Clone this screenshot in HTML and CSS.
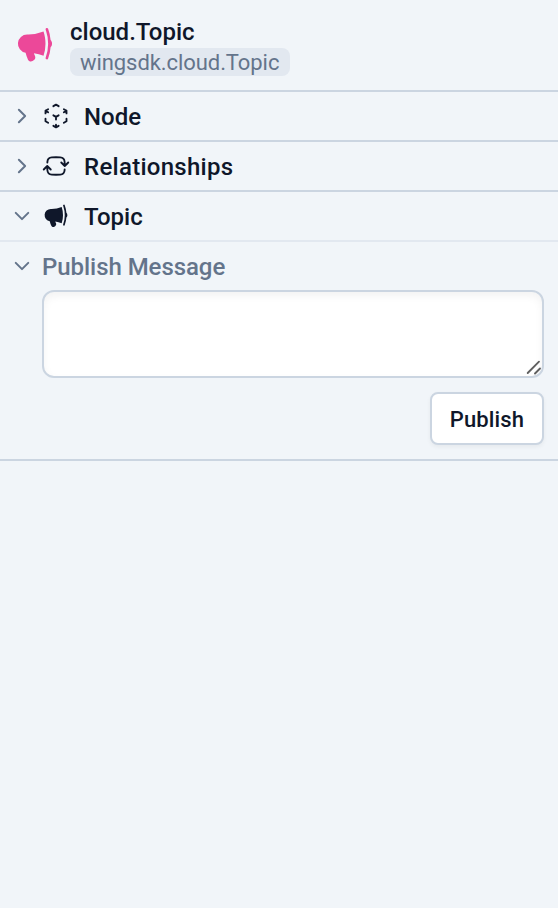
FILE: index.html
```html
<!DOCTYPE html>
<html lang="en">
<head>
<meta charset="utf-8">
<title>cloud.Topic</title>
<link rel="stylesheet" href="styles.css">
</head>
<body>
<svg class="defs" aria-hidden="true">
  <symbol id="megaphone" viewBox="0 0 24 24"><path fill="currentColor" d="M16.881 4.346A23.112 23.112 0 0 1 8.25 6H7.5a5.25 5.25 0 0 0-.88 10.427 21.593 21.593 0 0 0 1.378 3.94c.464 1.004 1.674 1.32 2.582.796l.657-.379c.88-.508 1.165-1.593.772-2.468a17.116 17.116 0 0 1-.628-1.607c1.918.258 3.76.75 5.5 1.446A21.727 21.727 0 0 0 18 11.25c0-2.414-.393-4.735-1.119-6.904ZM18.26 3.74a23.22 23.22 0 0 1 1.24 7.51 23.22 23.22 0 0 1-1.41 7.992.75.75 0 1 0 1.409.516 24.555 24.555 0 0 0 1.415-6.43 2.992 2.992 0 0 0 .836-2.078c0-.807-.319-1.54-.836-2.078a24.65 24.65 0 0 0-1.415-6.43.75.75 0 1 0-1.409.516c.059.16.116.321.17.483Z"/></symbol>
  <symbol id="right" viewBox="0 0 24 24"><path d="m8.25 4.5 7.5 7.5-7.5 7.5"/></symbol>
  <symbol id="down" viewBox="0 0 24 24"><path d="m19.5 8.25-7.5 7.5-7.5-7.5"/></symbol>
</svg>
<header class="header">
  <svg class="logo"><use href="#megaphone"/></svg>
  <div class="heading">
    <div class="title">cloud.Topic</div>
    <div class="badge"><span>wingsdk.cloud.Topic</span></div>
  </div>
</header>
<section class="row">
  <svg class="chevron"><use href="#right"/></svg>
  <svg class="icon" viewBox="0 0 24 24"><path d="m21 7.5-2.25-1.313M21 7.5v2.25m0-2.25-2.25 1.313M3 7.5l2.25-1.313M3 7.5l2.25 1.313M3 7.5v2.25m9 3 2.25-1.313M12 12.75l-2.25-1.313M12 12.75V15m0 6.75 2.25-1.313M12 21.75V19.5m0 2.25-2.25-1.313m0-16.875L12 2.25l2.25 1.313M21 14.25v2.25l-2.25 1.313m-13.5 0L3 16.5v-2.25"/></svg>
  <span class="label node">Node</span>
</section>
<section class="row">
  <svg class="chevron"><use href="#right"/></svg>
  <svg class="icon" viewBox="0 0 24 24"><path d="M19.5 12c0-1.232-.046-2.453-.138-3.662a4.006 4.006 0 0 0-3.7-3.7 48.678 48.678 0 0 0-7.324 0 4.006 4.006 0 0 0-3.7 3.7c-.017.22-.032.441-.046.662M19.5 12l3-3m-3 3-3-3m-12 3c0 1.232.046 2.453.138 3.662a4.006 4.006 0 0 0 3.7 3.7 48.656 48.656 0 0 0 7.324 0 4.006 4.006 0 0 0 3.7-3.7c.017-.22.032-.441.046-.662M4.5 12l3 3m-3-3-3 3"/></svg>
  <span class="label relationships">Relationships</span>
</section>
<section class="row open">
  <svg class="chevron"><use href="#down"/></svg>
  <svg class="icon solid"><use href="#megaphone"/></svg>
  <span class="label topic">Topic</span>
</section>
<section class="panel">
  <div class="subrow">
    <svg class="chevron"><use href="#down"/></svg>
    <span class="label publish-message">Publish Message</span>
  </div>
  <div class="form">
    <div class="field">
      <textarea class="message" aria-label="Message"></textarea>
      <svg class="grip" viewBox="0 0 16 16"><path d="M1.7 14 13 2.7M9 14.5l5-5"/></svg>
    </div>
    <button class="button" type="button">Publish</button>
  </div>
</section>
</body>
</html>
```

FILE: styles.css
```css
* { box-sizing: border-box; }
body {
  margin: 0;
  min-height: 100vh;
  background: #f1f5f9;
  color: #0f172a;
  font: 500 24px/32px Roboto, sans-serif;
}
.defs { display: none; }
svg { display: block; flex: none; }
.header {
  display: flex;
  align-items: center;
  gap: 14px;
  height: 92px;
  padding: 0 14px;
  border-bottom: 2px solid #cbd5e1;
}
.logo { width: 42px; height: 42px; color: #ec4899; }
.heading { padding-top: 4px; }
.title { margin-bottom: 2px; line-height: 28px; }
.badge {
  width: 220px;
  height: 28px;
  padding-left: 10px;
  border-radius: 8px;
  background: #e2e8f0;
  color: #64748b;
  font-size: 22px;
  font-weight: 400;
  line-height: 29px;
  letter-spacing: -0.07px;
  white-space: nowrap;
}
.row {
  display: flex;
  align-items: center;
  height: 50px;
  padding: 0 12px;
  border-bottom: 2px solid #cbd5e1;
}
.row.open { border-color: #e2e8f0; }
.chevron, .icon {
  fill: none;
  stroke: currentColor;
  stroke-width: 1.6;
  stroke-linecap: round;
  stroke-linejoin: round;
}
.chevron {
  width: 20px;
  height: 20px;
  margin-right: 10px;
  color: #64748b;
  stroke-width: 2.4;
}
.icon { width: 28px; height: 28px; margin-right: 14px; }
.solid { stroke: none; }
.label { padding-top: 2px; white-space: nowrap; }
.relationships { letter-spacing: 0.28px; }
.publish-message { letter-spacing: -0.05px; }
.panel {
  height: 219px;
  padding-right: 14px;
  border-bottom: 2px solid #cbd5e1;
}
.subrow {
  display: flex;
  align-items: center;
  height: 48px;
  padding-left: 12px;
  color: #64748b;
}
.form {
  display: flex;
  flex-direction: column;
  align-items: flex-end;
  gap: 14px;
  padding-left: 42px;
}
.field { position: relative; width: 100%; height: 88px; }
.message {
  display: block;
  width: 100%;
  height: 100%;
  padding: 12px 16px;
  border: 2px solid #cbd5e1;
  border-radius: 12px;
  outline: 0;
  background: #fff;
  box-shadow: inset 0 4px 8px rgb(0 0 0 / 5%);
  font: inherit;
  resize: none;
}
.grip {
  position: absolute;
  right: 2px;
  bottom: 3px;
  width: 16px;
  height: 16px;
  fill: none;
  stroke: #606060;
  stroke-width: 1.9;
  stroke-linecap: round;
}
.button {
  width: 114px;
  height: 53px;
  padding: 2px 0 0;
  border: 2px solid #cbd5e1;
  border-radius: 8px;
  background: #fff;
  box-shadow: 0 2px 4px rgb(0 0 0 / 5%);
  color: #0f172a;
  font: 500 22px/30px Roboto, sans-serif;
  letter-spacing: 0.15px;
}
```
